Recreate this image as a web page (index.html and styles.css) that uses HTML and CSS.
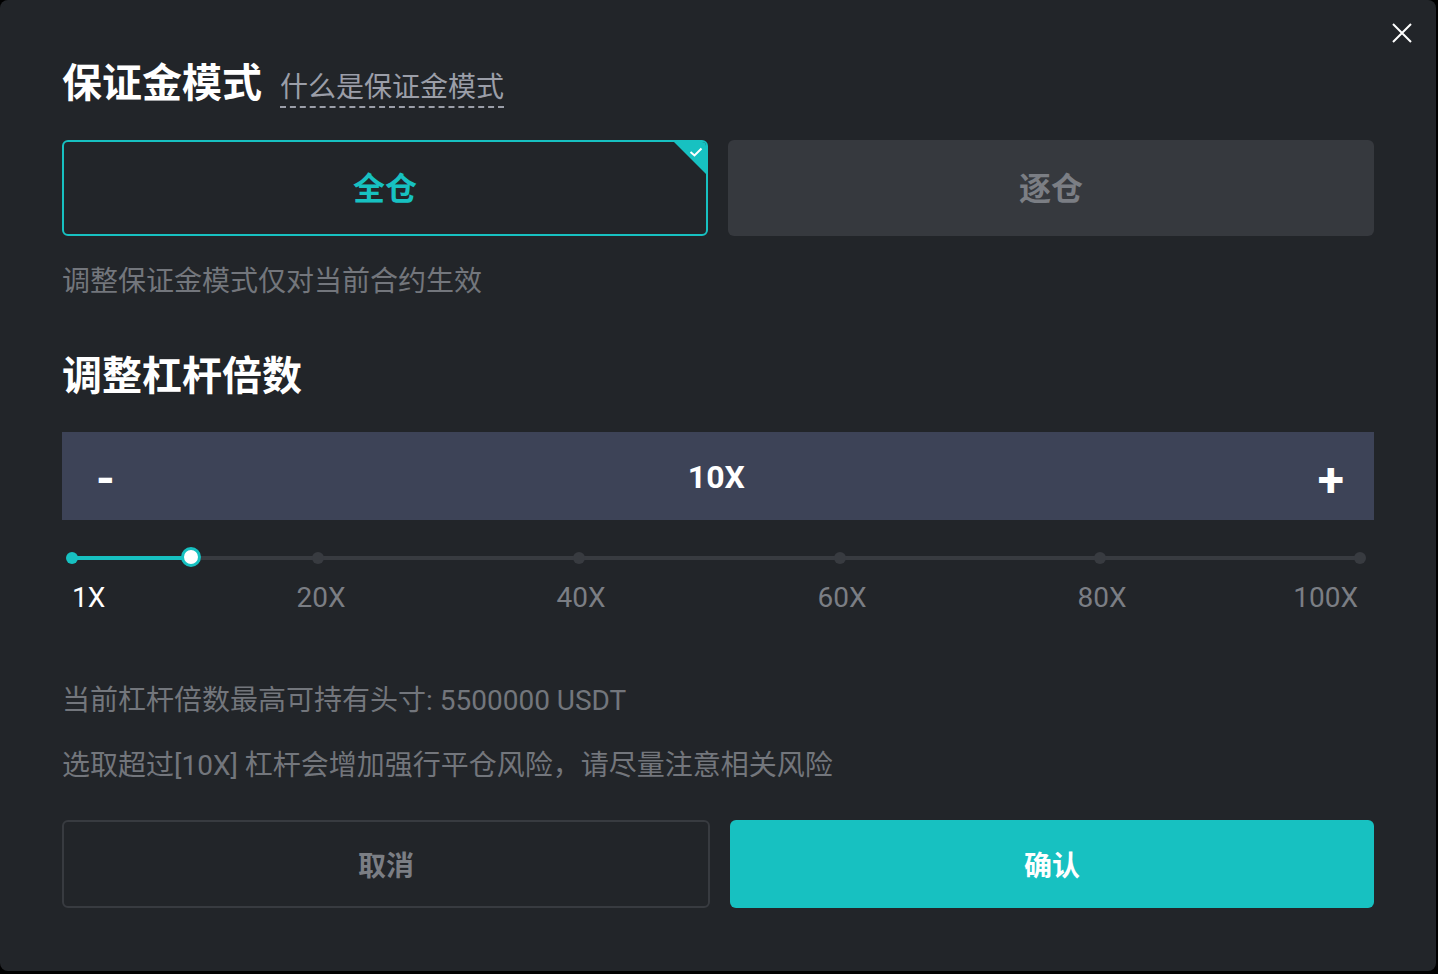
FILE: index.html
```html
<!DOCTYPE html>
<html>
<head>
    <meta charset="utf-8">
    <title>保证金模式</title>
    <link rel="stylesheet" href="styles.css">
</head>
<body>
    <div class="modal">
        <button class="close-btn" aria-label="关闭">
            <svg width="22" height="22" viewBox="0 0 22 22"><path d="M2 2 L20 20 M20 2 L2 20" stroke="#fff" stroke-width="2" fill="none"/></svg>
        </button>

        <div class="title-row">
            <h2 class="title">保证金模式</h2>
            <a class="help-link">什么是保证金模式</a>
        </div>

        <div class="mode-options">
            <div class="mode-option selected">
                全仓
                <span class="check-badge">
                    <svg width="14" height="10" viewBox="0 0 14 10"><path d="M1.5 5 L5.5 8.5 L12.5 1.5" stroke="#fff" stroke-width="2" fill="none"/></svg>
                </span>
            </div>
            <div class="mode-option">逐仓</div>
        </div>
        <p class="note">调整保证金模式仅对当前合约生效</p>

        <h2 class="title section">调整杠杆倍数</h2>

        <div class="stepper">
            <span class="step-btn minus">-</span>
            <span class="step-value">10X</span>
            <span class="step-btn plus">+</span>
        </div>

        <div class="slider">
            <div class="track"></div>
            <div class="track-fill" style="width: 119px"></div>
            <span class="dot active" style="left: 10px"></span>
            <span class="dot" style="left: 256px"></span>
            <span class="dot" style="left: 517px"></span>
            <span class="dot" style="left: 778px"></span>
            <span class="dot" style="left: 1038px"></span>
            <span class="dot" style="left: 1298px"></span>
            <span class="handle" style="left: 129px"></span>

            <span class="mark first">1X</span>
            <span class="mark" style="left: 259px">20X</span>
            <span class="mark" style="left: 519px">40X</span>
            <span class="mark" style="left: 780px">60X</span>
            <span class="mark" style="left: 1040px">80X</span>
            <span class="mark last">100X</span>
        </div>

        <p class="info first-info">当前杠杆倍数最高可持有头寸: 5500000 USDT</p>
        <p class="info">选取超过[10X] 杠杆会增加强行平仓风险，请尽量注意相关风险</p>

        <div class="actions">
            <button class="btn cancel">取消</button>
            <button class="btn confirm">确认</button>
        </div>
    </div>
</body>
</html>
```

FILE: styles.css
```css
html, body {
    margin: 0;
    padding: 0;
    background: #000;
}
body {
    font-family: Roboto, "Noto Sans CJK SC", sans-serif;
    width: 1438px;
    height: 974px;
    overflow: hidden;
}
.modal {
    position: relative;
    width: 1436px;
    height: 971px;
    box-sizing: border-box;
    background: #222529;
    border-radius: 8px;
    padding: 60px 62px 0 62px;
}
.close-btn {
    position: absolute;
    top: 22px;
    right: 23px;
    width: 22px;
    height: 22px;
    padding: 0;
    border: none;
    background: none;
    cursor: pointer;
}
.close-btn svg {
    display: block;
}
.title-row {
    display: flex;
    align-items: center;
    gap: 18px;
    height: 48px;
}
.title {
    margin: 0;
    color: #fff;
    font-size: 40px;
    line-height: 48px;
    font-weight: 700;
}
.help-link {
    color: #9b9ea8;
    font-size: 28px;
    line-height: 36px;
    margin-top: 10px;
    border-bottom: 2px dashed #9b9ea8;
    cursor: pointer;
}
.mode-options {
    display: grid;
    grid-template-columns: 1fr 1fr;
    gap: 20px;
    margin-top: 32px;
}
.mode-option {
    position: relative;
    height: 96px;
    box-sizing: border-box;
    display: flex;
    align-items: center;
    justify-content: center;
    padding-bottom: 4px;
    background: #36393e;
    color: #7b7e84;
    border-radius: 6px;
    font-size: 32px;
    font-weight: 700;
    overflow: hidden;
}
.mode-option.selected {
    background: #222529;
    border: 2px solid #17c1c1;
    color: #17c1c1;
}
.check-badge {
    position: absolute;
    top: 0;
    right: 0;
    width: 32px;
    height: 32px;
    background: #17c1c1;
    clip-path: polygon(0 0, 100% 0, 100% 100%);
}
.check-badge svg {
    position: absolute;
    top: 5px;
    right: 3px;
}
.note {
    margin: 26px 0 0;
    color: #73767c;
    font-size: 28px;
    line-height: 40px;
}
.title.section {
    margin-top: 51px;
}
.stepper {
    display: flex;
    align-items: center;
    justify-content: space-between;
    height: 88px;
    margin-top: 31px;
    padding: 0 30px 0 34px;
    background: #3d4357;
    color: #fff;
    font-weight: 700;
}
.step-btn {
    font-size: 48px;
    line-height: 48px;
    cursor: pointer;
}
.step-btn.minus {
    margin-top: 6px;
}
.step-btn.plus {
    margin-top: 8px;
}
.step-value {
    font-size: 32px;
    margin-top: 2px;
}
.slider {
    position: relative;
    height: 72px;
    margin-top: 28px;
}
.track {
    position: absolute;
    top: 8px;
    left: 10px;
    right: 14px;
    height: 4px;
    background: #383b40;
}
.track-fill {
    position: absolute;
    top: 8px;
    left: 10px;
    height: 4px;
    background: #17c1c1;
}
.dot {
    position: absolute;
    top: 4px;
    width: 12px;
    height: 12px;
    margin-left: -6px;
    border-radius: 50%;
    background: #383b40;
}
.dot.active {
    background: #17c1c1;
}
.handle {
    position: absolute;
    top: -1px;
    width: 14px;
    height: 14px;
    margin-left: -10px;
    border-radius: 50%;
    background: #fff;
    border: 3px solid #17c1c1;
}
.mark {
    position: absolute;
    top: 32px;
    transform: translateX(-50%);
    color: #7b7e84;
    font-size: 28px;
    line-height: 36px;
}
.mark.first {
    left: 10px;
    transform: none;
    color: #fff;
}
.mark.last {
    right: 16px;
    transform: none;
}
.info {
    margin: 25px 0 0;
    color: #73767c;
    font-size: 28px;
    line-height: 40px;
}
.info.first-info {
    margin-top: 61px;
}
.actions {
    display: grid;
    grid-template-columns: 648px 1fr;
    gap: 20px;
    margin-top: 34px;
}
.btn {
    height: 88px;
    padding-bottom: 2px;
    border-radius: 6px;
    font-family: inherit;
    font-size: 28px;
    font-weight: 700;
    cursor: pointer;
}
.btn.cancel {
    background: transparent;
    border: 2px solid #383b40;
    color: #7b7e84;
}
.btn.confirm {
    background: #17c1c1;
    border: none;
    color: #fff;
}
```
